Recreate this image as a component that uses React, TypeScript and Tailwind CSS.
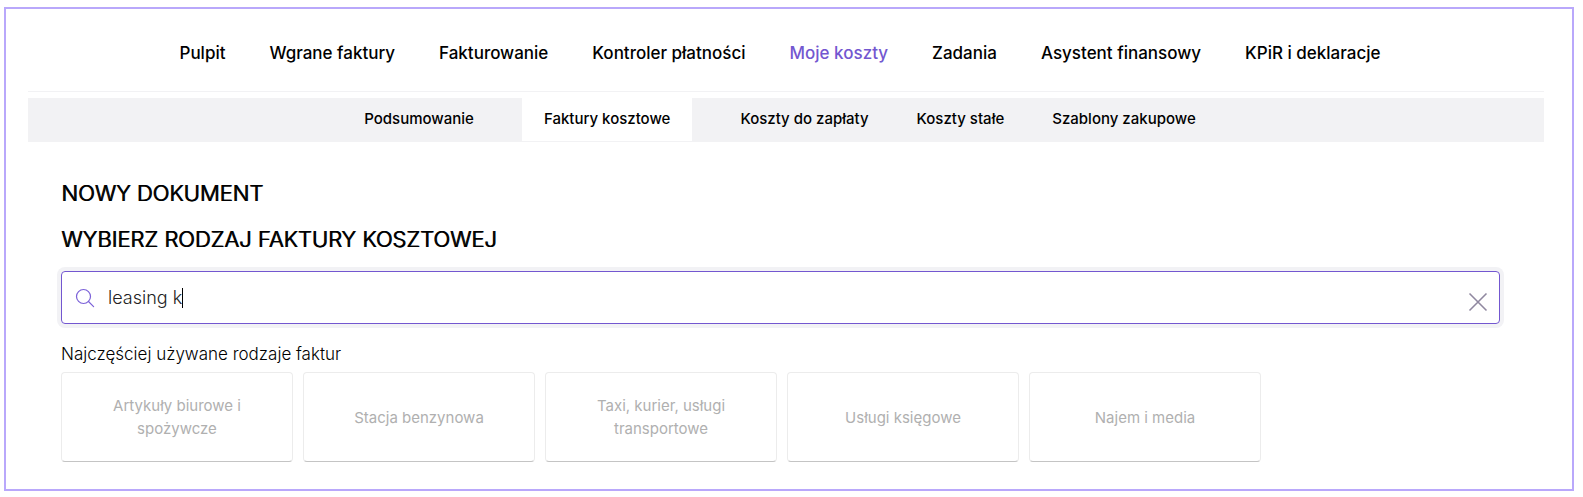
import { useState } from 'react';
import clsx from 'clsx';

const mainLinks = [
  'Pulpit',
  'Wgrane faktury',
  'Fakturowanie',
  'Kontroler płatności',
  'Moje koszty',
  'Zadania',
  'Asystent finansowy',
  'KPiR i deklaracje',
];

const subLinks = ['Podsumowanie', 'Faktury kosztowe', 'Koszty do zapłaty', 'Koszty stałe', 'Szablony zakupowe'];

const invoiceTypes = [
  'Artykuły biurowe i spożywcze',
  'Stacja benzynowa',
  'Taxi, kurier, usługi transportowe',
  'Usługi księgowe',
  'Najem i media',
];

function MainNav({ active }: { active: string }) {
  return (
    <nav className="flex justify-center gap-11 border-b border-[#f2f2f4] pt-[30px] pr-3 pb-6 text-[17px] leading-7 font-medium">
      {mainLinks.map(l => (
        <a key={l} href="#" className={clsx('whitespace-nowrap', l === active && 'text-[#7357d0]')}>{l}</a>
      ))}
    </nav>
  );
}

function SubNav({ active }: { active: string }) {
  return (
    <nav className="mt-1.5 flex h-11 justify-center gap-12 border-b border-[#f2f2f4] bg-[#f2f2f4] pr-3 text-[15px] font-medium">
      {subLinks.map(l => (
        <a
          key={l}
          href="#"
          className={clsx('flex items-center whitespace-nowrap', l === active && 'bg-white px-[22px]')}
        >
          {l}
        </a>
      ))}
    </nav>
  );
}

function SearchBox() {
  const [query, setQuery] = useState('leasing k');

  return (
    <div className="mt-[13px] flex h-[53px] items-center rounded border border-[#7357d0] px-[13px] ring-4 ring-[#f2f2f5]">
      <svg className="h-5 w-5 shrink-0 text-[#7b61d8]" viewBox="0 0 20 20" fill="none" stroke="currentColor" strokeWidth="1.2">
        <circle cx="8.5" cy="8.5" r="7" />
        <path d="M13.5 13.5 18.6 18.6" strokeLinecap="round" />
      </svg>
      <input
        type="text"
        aria-label="Szukaj rodzaju faktury"
        value={query}
        onChange={e => setQuery(e.target.value)}
        className="field-sizing-content ml-[13px] text-lg font-light text-[#222] caret-transparent outline-none"
      />
      <span className="h-5 w-px bg-black" />
      <button type="button" aria-label="Wyczyść" onClick={() => setQuery('')} className="mt-2 -mr-1 ml-auto pr-0.5 text-[#9088a0]">
        <svg className="h-5 w-5" viewBox="0 0 20 20" fill="none" stroke="currentColor" strokeWidth="1.6">
          <path d="M1.5 1.5 18.5 18.5M18.5 1.5 1.5 18.5" />
        </svg>
      </button>
    </div>
  );
}

export default function App() {
  return (
    <div className="bg-white pt-[7px] pr-[9px] pb-1.5 pl-1 font-['Inter',sans-serif] text-black">
      <div className="border-2 border-[#b9a8fb] pr-7 pb-[27px] pl-[22px]">
        <MainNav active="Moje koszty" />
        <SubNav active="Faktury kosztowe" />

        <main className="pt-8 pr-11 pl-[33px]">
          <h1 className="text-[22px] leading-[38px] font-light [text-shadow:1px_0_currentColor]">NOWY DOKUMENT</h1>
          <h2 className="mt-2 text-[22px] leading-[38px] font-light [text-shadow:1px_0_currentColor]">
            WYBIERZ RODZAJ FAKTURY KOSZTOWEJ
          </h2>
          <SearchBox />

          <p className="mt-4 text-[17px] leading-7 font-light">Najczęściej używane rodzaje faktur</p>
          <div className="mt-1 flex flex-wrap gap-2.5">
            {invoiceTypes.map(t => (
              <button
                key={t}
                type="button"
                className="h-[90px] w-[232px] rounded border border-[#ececec] border-b-[#c4c4c4] px-10 text-[15px] leading-[23px] text-[#b0b0b0]"
              >
                {t}
              </button>
            ))}
          </div>
        </main>
      </div>
    </div>
  );
}
